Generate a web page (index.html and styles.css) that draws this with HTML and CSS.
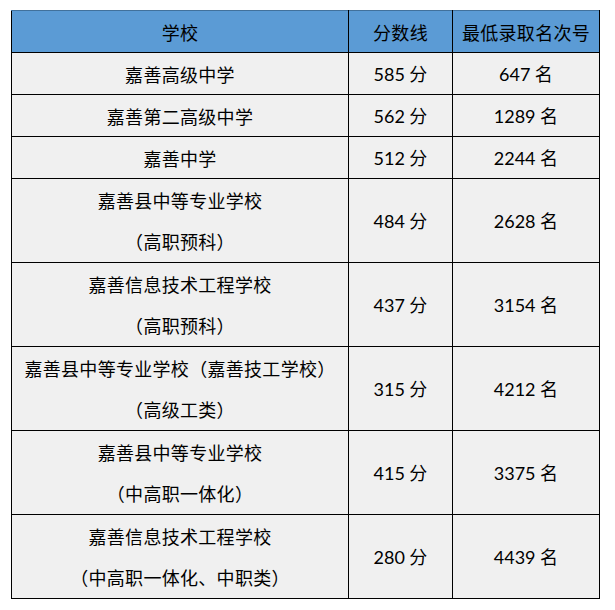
FILE: index.html
```html
<!DOCTYPE html>
<html lang="zh-CN">
<head>
<meta charset="utf-8">
<link rel="stylesheet" href="styles.css">
</head>
<body>
<table class="score-table">
  <colgroup>
    <col class="c-school">
    <col class="c-score">
    <col class="c-rank">
  </colgroup>
  <thead>
    <tr><th>学校</th><th>分数线</th><th>最低录取名次号</th></tr>
  </thead>
  <tbody>
    <tr class="single"><td>嘉善高级中学</td><td><span class="num">585</span> 分</td><td><span class="num">647</span> 名</td></tr>
    <tr class="single"><td>嘉善第二高级中学</td><td><span class="num">562</span> 分</td><td><span class="num">1289</span> 名</td></tr>
    <tr class="single"><td>嘉善中学</td><td><span class="num">512</span> 分</td><td><span class="num">2244</span> 名</td></tr>
    <tr class="double"><td><div class="ln">嘉善县中等专业学校</div><div class="ln">（高职预科）</div></td><td><span class="num">484</span> 分</td><td><span class="num">2628</span> 名</td></tr>
    <tr class="double"><td><div class="ln">嘉善信息技术工程学校</div><div class="ln">（高职预科）</div></td><td><span class="num">437</span> 分</td><td><span class="num">3154</span> 名</td></tr>
    <tr class="double"><td><div class="ln">嘉善县中等专业学校（嘉善技工学校）</div><div class="ln">（高级工类）</div></td><td><span class="num">315</span> 分</td><td><span class="num">4212</span> 名</td></tr>
    <tr class="double"><td><div class="ln">嘉善县中等专业学校</div><div class="ln">（中高职一体化）</div></td><td><span class="num">415</span> 分</td><td><span class="num">3375</span> 名</td></tr>
    <tr class="double"><td><div class="ln">嘉善信息技术工程学校</div><div class="ln">（中高职一体化、中职类）</div></td><td><span class="num">280</span> 分</td><td><span class="num">4439</span> 名</td></tr>
  </tbody>
</table>
</body>
</html>
```
FILE: styles.css
```css
html, body {
  margin: 0;
  padding: 0;
  background: #ffffff;
}
body {
  padding: 10px 0 0 11px;
  font-family: "Noto Sans CJK SC", "Noto Sans", sans-serif;
  color: #000;
}
.score-table {
  border-collapse: collapse;
  table-layout: fixed;
  width: 588px;
  font-size: 18px;
  line-height: 1;
  text-spacing-trim: space-all;
  letter-spacing: 0.3px;
}
.c-school { width: 337px; }
.c-score { width: 104px; }
.c-rank { width: 147px; }
.score-table th,
.score-table td {
  border: 1px solid #000;
  text-align: center;
  vertical-align: middle;
  padding: 0;
  font-weight: normal;
  background: #f0f0f0;
}
.score-table thead th {
  background: #5b9bd5;
  height: 41px;
  border-top-color: #41719c;
}
.single td { height: 41px; }
.double td { height: 83px; }
.ln {
  line-height: 41px;
}
.num {
  font-family: "Lato", "Open Sans", sans-serif;
  font-size: 18px;
  letter-spacing: 0;
}
```
